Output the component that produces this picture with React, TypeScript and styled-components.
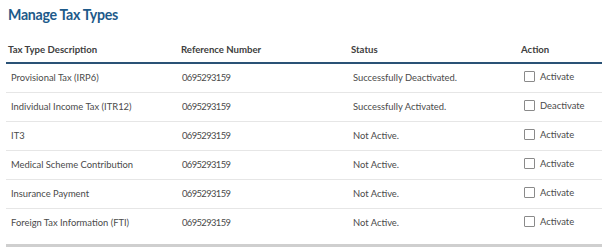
import React from "react";
import styled, { createGlobalStyle } from "styled-components";

const Global = createGlobalStyle`
  html, body { margin: 0; padding: 0; background: #fff; }
  body { font-family: Lato, "Open Sans", sans-serif; }
`;

const Panel = styled.div`
  width: 602px;
  height: 247px;
  box-sizing: border-box;
  padding: 5px 0 0 6px;
  display: flex;
  flex-direction: column;
  overflow: hidden;
`;

const Title = styled.h1`
  margin: 0 0 0 2px;
  font-size: 14.2px;
  letter-spacing: -0.3px;
  line-height: 20px;
  font-weight: 700;
  color: #1d5a8a;
`;

const Table = styled.table`
  margin-top: 11px;
  width: 596px;
  border-collapse: collapse;
  table-layout: fixed;
`;

const Th = styled.th<{ $w: number; $pl: number }>`
  box-sizing: border-box;
  width: ${(p) => p.$w}px;
  text-align: left;
  font-size: 9.6px;
  font-weight: 700;
  color: #404040;
  height: 27px;
  padding: 0 0 0 ${(p) => p.$pl}px;
  border-bottom: 2px solid #2a5276;
  vertical-align: middle;
`;

const Tr = styled.tr<{ $last?: boolean }>`
  border-bottom: ${(p) => (p.$last ? "none" : "1px solid #e6e6e6")};
`;

const Td = styled.td<{ $pl: number; $tight?: boolean }>`
  box-sizing: border-box;
  font-size: 9.4px;
  letter-spacing: ${(p) => (p.$tight ? "-0.6px" : "normal")};
  color: #4a4a4a;
  height: 29px;
  padding: 0 0 0 ${(p) => p.$pl}px;
  vertical-align: middle;
  white-space: nowrap;
`;

const Check = styled.label`
  display: inline-flex;
  align-items: center;
  gap: 5px;
`;

const Box = styled.span`
  width: 9px;
  height: 9px;
  border: 1px solid #8a8a8a;
  border-radius: 1px;
  background: #fff;
  display: inline-block;
`;

const Footer = styled.div`
  margin-top: auto;
  height: 3px;
  background: #cfcfcf;
`;

const rows = [
  ["Provisional Tax (IRP6)", "Successfully Deactivated.", "Activate"],
  ["Individual Income Tax (ITR12)", "Successfully Activated.", "Deactivate"],
  ["IT3", "Not Active.", "Activate"],
  ["Medical Scheme Contribution", "Not Active.", "Activate"],
  ["Insurance Payment", "Not Active.", "Activate"],
  ["Foreign Tax Information (FTI)", "Not Active.", "Activate"],
];

export default function App() {
  return (
    <>
      <Global />
      <Panel>
        <Title>Manage Tax Types</Title>
        <Table>
          <thead>
            <tr>
              <Th $w={172} $pl={2}>Tax Type Description</Th>
              <Th $w={172} $pl={3}>Reference Number</Th>
              <Th $w={168} $pl={1}>Status</Th>
              <Th $w={84} $pl={3}>Action</Th>
            </tr>
          </thead>
          <tbody>
            {rows.map((r, i) => (
              <Tr key={i} $last={i === rows.length - 1}>
                <Td $pl={5}>{r[0]}</Td>
                <Td $pl={4} $tight>0695293159</Td>
                <Td $pl={3}>{r[1]}</Td>
                <Td $pl={6}>
                  <Check>
                    <Box />
                    {r[2]}
                  </Check>
                </Td>
              </Tr>
            ))}
          </tbody>
        </Table>
        <Footer />
      </Panel>
    </>
  );
}
